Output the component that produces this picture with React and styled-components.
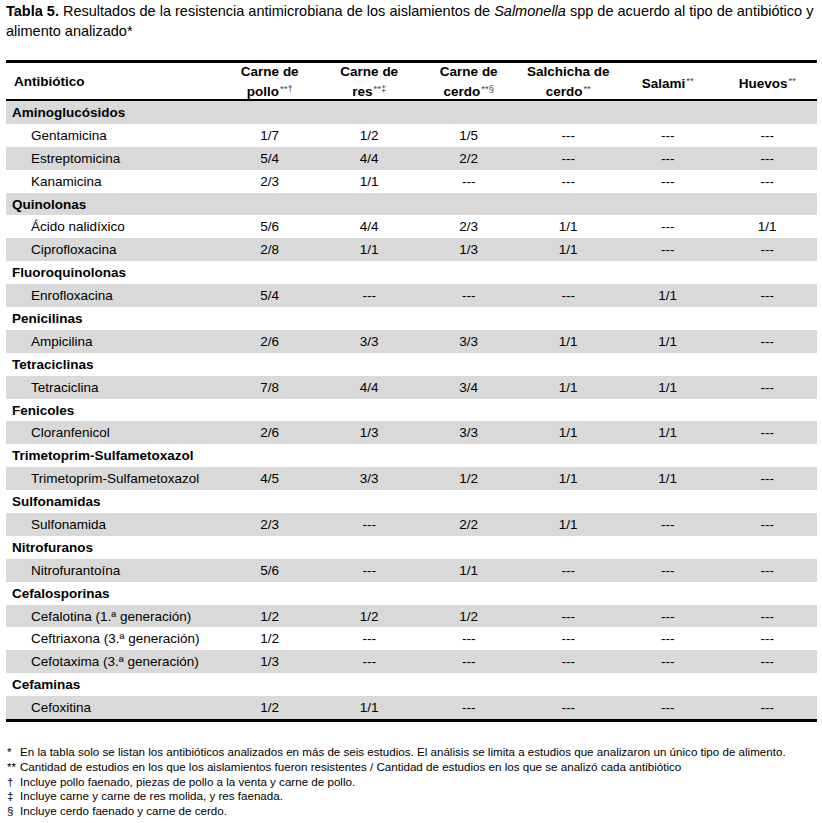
import React from "react"
import styled, { createGlobalStyle } from "styled-components"

const GlobalStyle = createGlobalStyle`
    body {
        margin: 0;
        background: #fff;
        color: #000;
        font-family: "Liberation Sans", Arial, sans-serif;
    }
`

const Page = styled.div`
    width: 811px;
    padding: 1px 0 0 6px;
`

const Caption = styled.p`
    margin: 0;
    font-size: 14.5px;
    line-height: 20px;
    white-space: nowrap;
`

const Table = styled.div`
    margin-top: 19px;
    border-top: 3px solid #000;
    border-bottom: 3px solid #000;
`

const Row = styled.div`
    display: grid;
    grid-template-columns: 214px repeat(6, 1fr);
    align-items: center;
    height: ${p => (p.$head ? "36px" : "22.9px")};
    background: ${p => (p.$shade ? "#d9d9d9" : "#fff")};
    border-bottom: ${p => (p.$head ? "2px solid #000" : "none")};
    font-size: 13.5px;
    font-weight: ${p => (p.$head || p.$group ? "bold" : "normal")};
`

const NameCell = styled.div`
    padding-left: ${p => p.$indent}px;
    white-space: nowrap;
`

const Cell = styled.div`
    text-align: center;
    line-height: 17px;
`

const Sup = styled.span`
    font-size: 9.5px;
    font-weight: normal;
    color: #444;
    vertical-align: 4px;
    margin-left: 1px;
`

const Notes = styled.div`
    margin-top: 23px;
    display: grid;
    grid-template-columns: 14px auto;
    font-size: 11.6px;
    line-height: 14.8px;
`

const Mark = styled.span`
    padding-left: 1px;
`

const heads = [
    ["Carne de", "pollo", "**†"],
    ["Carne de", "res", "**‡"],
    ["Carne de", "cerdo", "**§"],
    ["Salchicha de", "cerdo", "**"],
    [null, "Salami", "**"],
    [null, "Huevos", "**"],
]

const D = "---"

const groups = [
    ["Aminoglucósidos", [
        ["Gentamicina", "1/7", "1/2", "1/5", D, D, D],
        ["Estreptomicina", "5/4", "4/4", "2/2", D, D, D],
        ["Kanamicina", "2/3", "1/1", D, D, D, D],
    ]],
    ["Quinolonas", [
        ["Ácido nalidíxico", "5/6", "4/4", "2/3", "1/1", D, "1/1"],
        ["Ciprofloxacina", "2/8", "1/1", "1/3", "1/1", D, D],
    ]],
    ["Fluoroquinolonas", [
        ["Enrofloxacina", "5/4", D, D, D, "1/1", D],
    ]],
    ["Penicilinas", [
        ["Ampicilina", "2/6", "3/3", "3/3", "1/1", "1/1", D],
    ]],
    ["Tetraciclinas", [
        ["Tetraciclina", "7/8", "4/4", "3/4", "1/1", "1/1", D],
    ]],
    ["Fenicoles", [
        ["Cloranfenicol", "2/6", "1/3", "3/3", "1/1", "1/1", D],
    ]],
    ["Trimetoprim-Sulfametoxazol", [
        ["Trimetoprim-Sulfametoxazol", "4/5", "3/3", "1/2", "1/1", "1/1", D],
    ]],
    ["Sulfonamidas", [
        ["Sulfonamida", "2/3", D, "2/2", "1/1", D, D],
    ]],
    ["Nitrofuranos", [
        ["Nitrofurantoína", "5/6", D, "1/1", D, D, D],
    ]],
    ["Cefalosporinas", [
        ["Cefalotina (1.ª generación)", "1/2", "1/2", "1/2", D, D, D],
        ["Ceftriaxona (3.ª generación)", "1/2", D, D, D, D, D],
        ["Cefotaxima (3.ª generación)", "1/3", D, D, D, D, D],
    ]],
    ["Cefaminas", [
        ["Cefoxitina", "1/2", "1/1", D, D, D, D],
    ]],
]

const notes = [
    ["*", "En la tabla solo se listan los antibióticos analizados en más de seis estudios. El análisis se limita a estudios que analizaron un único tipo de alimento."],
    ["**", "Cantidad de estudios en los que los aislamientos fueron resistentes / Cantidad de estudios en los que se analizó cada antibiótico"],
    ["†", "Incluye pollo faenado, piezas de pollo a la venta y carne de pollo."],
    ["‡", "Incluye carne y carne de res molida, y res faenada."],
    ["§", "Incluye cerdo faenado y carne de cerdo."],
]

// flatten groups so the shading can alternate row by row
const rows = []
groups.forEach(([name, items]) => {
    rows.push({ group: true, name })
    items.forEach(([label, ...vals]) => rows.push({ group: false, name: label, vals }))
})

const App = () => {
    return (
        <Page>
            <GlobalStyle />
            <Caption>
                <b>Tabla 5.</b> Resultados de la resistencia antimicrobiana de los aislamientos de <i>Salmonella</i> spp de acuerdo al tipo de antibiótico y<br />
                alimento analizado*
            </Caption>

            <Table>
                <Row $head>
                    <NameCell $indent={8}>Antibiótico</NameCell>
                    {heads.map(([top, bottom, mark], i) => (
                        <Cell key={i}>
                            {top && <>{top}<br /></>}
                            {bottom}<Sup>{mark}</Sup>
                        </Cell>
                    ))}
                </Row>
                {rows.map((r, i) => (
                    <Row key={i} $shade={i % 2 === 0} $group={r.group}>
                        <NameCell $indent={r.group ? 6 : 25}>{r.name}</NameCell>
                        {!r.group && r.vals.map((v, j) => <Cell key={j}>{v}</Cell>)}
                    </Row>
                ))}
            </Table>

            <Notes>
                {notes.map(([m, text]) => (
                    <React.Fragment key={m}>
                        <Mark>{m}</Mark>
                        <span>{text}</span>
                    </React.Fragment>
                ))}
            </Notes>
        </Page>
    )
}

export default App
